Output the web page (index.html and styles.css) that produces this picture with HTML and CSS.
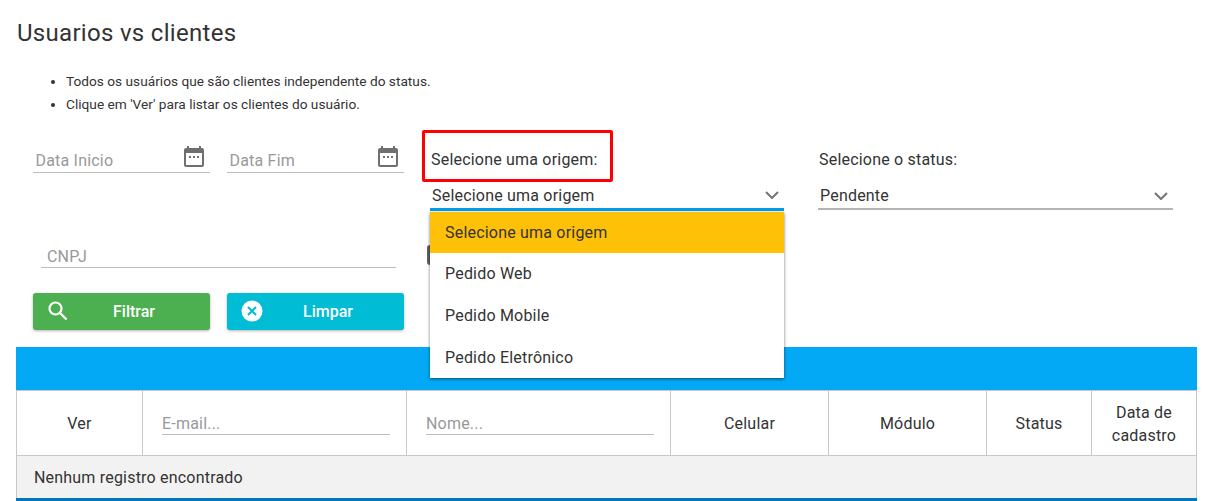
FILE: index.html
```html
<!DOCTYPE html>
<html>
<head>
    <meta charset="utf-8" />
    <title>Usuarios vs clientes</title>
    <link rel="stylesheet" href="styles.css">
</head>
<body>
    <main>
        <h1 class="page-title">Usuarios vs clientes</h1>
        <ul class="notes">
            <li>Todos os usuários que são clientes independente do status.</li>
            <li>Clique em 'Ver' para listar os clientes do usuário.</li>
        </ul>

        <div class="filters">
            <div class="left-col">
                <div class="date-row">
                    <div class="date-field">
                        <span class="placeholder">Data Inicio</span>
                        <svg class="cal" width="20" height="21" viewBox="0 0 20 21"><path fill="#6f6f6f" d="M3 0h2v2h10V0h2v2h1a2 2 0 0 1 2 2v15a2 2 0 0 1-2 2H2a2 2 0 0 1-2-2V4a2 2 0 0 1 2-2h1z"/><rect x="2" y="7" width="16" height="12" fill="#fff"/><path fill="#6f6f6f" d="M5 10h2v2H5zM9 10h2v2H9zM13 10h2v2h-2z"/></svg>
                    </div>
                    <div class="date-field">
                        <span class="placeholder">Data Fim</span>
                        <svg class="cal" width="20" height="21" viewBox="0 0 20 21"><path fill="#6f6f6f" d="M3 0h2v2h10V0h2v2h1a2 2 0 0 1 2 2v15a2 2 0 0 1-2 2H2a2 2 0 0 1-2-2V4a2 2 0 0 1 2-2h1z"/><rect x="2" y="7" width="16" height="12" fill="#fff"/><path fill="#6f6f6f" d="M5 10h2v2H5zM9 10h2v2H9zM13 10h2v2h-2z"/></svg>
                    </div>
                </div>
                <div class="cnpj-field"><span class="placeholder">CNPJ</span></div>
                <div class="buttons">
                    <button class="btn btn-green">
                        <svg class="btn-icon" width="24" height="24" viewBox="0 0 24 24"><circle cx="9.5" cy="9.5" r="6" fill="none" stroke="#fff" stroke-width="2.2"/><path d="M14 14l6.5 6.5" stroke="#fff" stroke-width="2.4"/></svg>
                        Filtrar
                    </button>
                    <button class="btn btn-cyan">
                        <svg class="btn-icon" width="24" height="24" viewBox="0 0 24 24"><circle cx="12" cy="12" r="10.5" fill="#fff"/><path d="M8 8l8 8M16 8l-8 8" stroke="#00bcd4" stroke-width="2"/></svg>
                        Limpar
                    </button>
                </div>
            </div>

            <div class="select-col origem">
                <label class="select-label">Selecione uma origem:</label>
                <div class="select-box active">
                    <span>Selecione uma origem</span>
                    <svg width="14" height="8" viewBox="0 0 14 8"><path d="M1 1l6 6 6-6" fill="none" stroke="#757575" stroke-width="2"/></svg>
                </div>
                <div class="highlight"></div>
                <div class="peek"></div>
                <ul class="dropdown">
                    <li class="selected">Selecione uma origem</li>
                    <li>Pedido Web</li>
                    <li>Pedido Mobile</li>
                    <li>Pedido Eletrônico</li>
                </ul>
            </div>

            <div class="select-col status">
                <label class="select-label">Selecione o status:</label>
                <div class="select-box">
                    <span>Pendente</span>
                    <svg width="14" height="8" viewBox="0 0 14 8"><path d="M1 1l6 6 6-6" fill="none" stroke="#757575" stroke-width="2"/></svg>
                </div>
            </div>
        </div>

        <div class="table-head-bar"></div>
        <table class="grid">
            <colgroup>
                <col class="c-ver"><col class="c-text"><col class="c-text"><col class="c-mid"><col class="c-mid"><col class="c-status"><col>
            </colgroup>
            <thead>
                <tr>
                    <th>Ver</th>
                    <th><div class="col-filter"><span class="placeholder">E-mail...</span></div></th>
                    <th><div class="col-filter name"><span class="placeholder">Nome...</span></div></th>
                    <th>Celular</th>
                    <th>Módulo</th>
                    <th>Status</th>
                    <th>Data de cadastro</th>
                </tr>
            </thead>
            <tbody>
                <tr><td colspan="7">Nenhum registro encontrado</td></tr>
            </tbody>
        </table>
    </main>
</body>
</html>
```

FILE: styles.css
```css
body {
    margin: 0;
    padding: 0;
    font-family: Roboto, "Liberation Sans", sans-serif;
    color: #333;
    background: #fff;
    letter-spacing: 0.2px;
    overflow: hidden;
}
main {
    padding: 19px 9px 0 16px;
}

.page-title {
    margin: 0;
    font-size: 24px;
    font-weight: 400;
    line-height: 28px;
    padding-left: 1px;
    color: #333;
    letter-spacing: 0.3px;
}

.notes {
    margin: 23px 0 0;
    padding-left: 50px;
    font-size: 13.7px;
    line-height: 23px;
    color: #333;
    letter-spacing: 0;
}

.placeholder {
    color: #999;
    font-size: 16px;
}

.filters {
    display: flex;
    margin-top: 14px;
    height: 217px;
}
.left-col {
    width: 388px;
    margin-left: 17px;
}
.date-row {
    display: flex;
    gap: 17px;
}
.date-field {
    width: 177px;
    height: 29px;
    box-sizing: border-box;
    margin-top: 14px;
    padding: 7px 0 0 2.5px;
    border-bottom: 1px solid #bdbdbd;
    display: flex;
    justify-content: space-between;
    line-height: 20px;
}
.cal {
    margin: -5px 6px 0 0;
}
.cnpj-field {
    width: 355px;
    height: 24px;
    box-sizing: border-box;
    margin: 71px 0 0 8px;
    padding: 2px 0 0 6px;
    border-bottom: 1px solid #bdbdbd;
    line-height: 22px;
}
.buttons {
    display: flex;
    gap: 17px;
    margin-top: 25px;
}
.btn {
    position: relative;
    width: 177px;
    height: 37px;
    border: 0;
    border-radius: 3px;
    color: #fff;
    font: 500 16px Roboto, sans-serif;
    text-align: center;
    padding: 0 0 0 25px;
    box-shadow: 0 1px 3px rgba(0, 0, 0, 0.3);
}
.btn-green {
    background: #4caf50;
}
.btn-cyan {
    background: #00bcd4;
}
.btn-icon {
    position: absolute;
    left: 13px;
    top: 6px;
}

.select-col {
    position: relative;
    font-size: 16px;
    color: #333;
}
.origem {
    width: 354px;
    margin-left: 9px;
}
.status {
    width: 355px;
    margin-left: 34px;
}
.select-label {
    display: block;
    padding: 20px 0 0 1px;
    line-height: 19px;
}
.select-box {
    display: flex;
    justify-content: space-between;
    align-items: center;
    height: 26px;
    box-sizing: border-box;
    margin-top: 15px;
    padding: 0 5px 1px 2px;
    border-bottom: 2px solid #b4b4b4;
}
.select-box.active {
    height: 27px;
    padding-bottom: 2px;
    border-bottom: 3px solid #039be5;
}
.highlight {
    position: absolute;
    left: -8px;
    top: 0;
    width: 191px;
    height: 52px;
    box-sizing: border-box;
    border: 3px solid #f00;
    border-radius: 2px;
}
.peek {
    position: absolute;
    left: -3px;
    top: 115px;
    width: 6px;
    height: 20px;
    background: #616161;
    border-radius: 3px 0 0 3px;
}
.dropdown {
    position: absolute;
    left: 0;
    top: 81.7px;
    width: 354px;
    margin: 0;
    padding: 0;
    list-style: none;
    background: #fff;
    box-shadow: 0 1px 3px rgba(0, 0, 0, 0.55);
}
.dropdown li {
    height: 41.7px;
    line-height: 41.7px;
    padding-left: 15px;
}
.dropdown li.selected {
    background: #ffc107;
}

.table-head-bar {
    height: 43px;
    width: 1181px;
    background: #03a9f4;
}
.grid {
    width: 1181px;
    table-layout: fixed;
    border-collapse: collapse;
    font-size: 16px;
    border-bottom: 3px solid #0277bd;
}
.c-ver {
    width: 126px;
}
.c-text {
    width: 264px;
}
.c-mid {
    width: 158px;
}
.c-status {
    width: 105px;
}
.grid th {
    height: 63px;
    padding: 1px 16px 0;
    border: 1px solid #c8c8c8;
    font-weight: 400;
    line-height: 23px;
    text-align: center;
}
.col-filter {
    height: 21px;
    margin: 0 0 0 3px;
    width: 228px;
    border-bottom: 1px solid #bdbdbd;
    text-align: left;
    padding-top: 1px;
    line-height: 22px;
}
.grid td {
    height: 42px;
    padding: 0 17px;
    background: #f2f2f2;
    border: 1px solid #c8c8c8;
    border-bottom: 0;
}
```
